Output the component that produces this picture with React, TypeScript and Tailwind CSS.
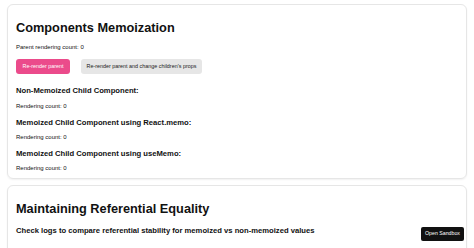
import { useState } from 'react'

export default function App() {
  const [parentCount] = useState(0)

  return (
    <div className="min-h-screen bg-white px-[7px] pt-[4px] text-[#111] font-['Liberation_Sans',Arial,sans-serif]">
      {/* Memoization card */}
      <div className="rounded-[6px] border border-[#e6e6e6] shadow-[0_1px_2px_rgba(0,0,0,0.06)] px-[8px] pt-[15px] pb-[5px]">
        <h1 className="text-[12.75px] leading-[15.3px] font-bold">Components Memoization</h1>
        <p className="mt-[8px] text-[6px] leading-[9px]">Parent rendering count: {parentCount}</p>

        <div className="mt-[7px] flex gap-[11px]">
          <button className="h-[15px] px-[6.5px] rounded-[3px] bg-[#eb4b8b] text-white text-[5.4px] leading-none">
            Re-render parent
          </button>
          <button className="h-[15px] px-[5.5px] rounded-[3px] bg-[#e6e6e6] text-[#222] text-[5.4px] leading-none">
            Re-render parent and change children's props
          </button>
        </div>

        <h3 className="mt-[12px] text-[7.65px] leading-[9.2px] font-bold">Non-Memoized Child Component:</h3>
        <p className="mt-[6px] text-[6px] leading-[9px]">Rendering count: 0</p>

        <h3 className="mt-[7px] text-[7.65px] leading-[9.2px] font-bold">Memoized Child Component using React.memo:</h3>
        <p className="mt-[6.5px] text-[6px] leading-[9px]">Rendering count: 0</p>

        <h3 className="mt-[6.3px] text-[7.65px] leading-[9.2px] font-bold">Memoized Child Component using useMemo:</h3>
        <p className="mt-[6.5px] text-[6px] leading-[9px]">Rendering count: 0</p>
      </div>

      {/* Referential equality card */}
      <div className="mt-[6px] rounded-[6px] border border-[#e6e6e6] shadow-[0_1px_2px_rgba(0,0,0,0.06)] px-[8px] pt-[15px] pb-[20px]">
        <h1 className="text-[12.75px] leading-[15.3px] font-bold">Maintaining Referential Equality</h1>
        <h3 className="mt-[9px] text-[7.65px] leading-[9.2px] font-bold">
          Check logs to compare referential stability for memoized vs non-memoized values
        </h3>
      </div>

      <button className="fixed right-[10px] bottom-[7px] h-[14px] px-[4px] rounded-[2px] bg-[#111] text-white text-[5.25px] leading-none">
        Open Sandbox
      </button>
    </div>
  )
}
